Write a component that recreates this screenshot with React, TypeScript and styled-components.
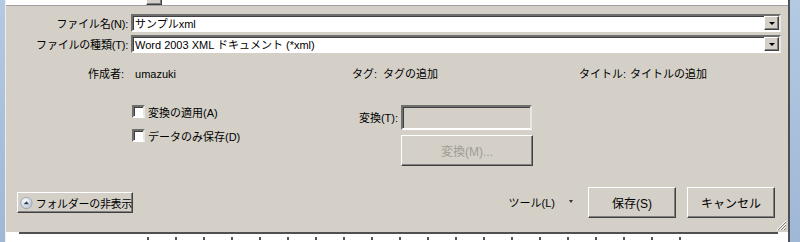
import React, { FC } from 'react';
import styled, { createGlobalStyle, css } from 'styled-components';

const GlobalStyle = createGlobalStyle`
  html, body {
    margin: 0;
    padding: 0;
    background: #ffffff;
  }
  body {
    font-family: "Liberation Sans", "Noto Sans CJK JP", sans-serif;
    font-size: 11px;
    color: #000;
  }
`;

const FACE = '#d4d0c8';

const sunken = css`
  border-style: solid;
  border-width: 2px;
  border-color: #6f6f6f #e8e6e0 #ffffff #6f6f6f;
  box-shadow: inset 1px 1px 0 #404040;
`;

const raised = css`
  border-style: solid;
  border-width: 1px;
  border-color: #ffffff #404040 #404040 #ffffff;
  box-shadow: inset -1px -1px 0 #808080;
`;

const Screen = styled.div`
  width: 800px;
  height: 242px;
  display: flex;
  flex-direction: column;
  overflow: hidden;
`;

const Middle = styled.div`
  display: flex;
  flex: 1;
`;

const Strip = styled.div<{ $w: number }>`
  width: ${ ({ $w }) => $w }px;
  background: linear-gradient(180deg, #b4c9e2, #9fb8d6);
`;

const Window = styled.div`
  flex: 1;
  display: flex;
  flex-direction: column;
  border-right: 2px solid #505050;
  border-left: 1px solid #f0eee8;
`;

const ListEdge = styled.div`
  height: 5px;
  background: #fff;
  border-bottom: 1px solid #a0a0a0;
  position: relative;
`;

const Thumb = styled.div`
  position: absolute;
  left: 140px;
  top: -2px;
  width: 14px;
  height: 5px;
  background: ${ FACE };
  ${ raised };
`;

const Dialog = styled.div`
  flex: 1;
  background: ${ FACE };
  display: flex;
  flex-direction: column;
  position: relative;
`;

const FileRows = styled.div`
  display: grid;
  grid-template-columns: 122px 650px;
  row-gap: 3px;
  column-gap: 3px;
  padding-top: 8px;
  align-items: center;
`;

const RowLabel = styled.div`
  text-align: right;
  white-space: nowrap;
  letter-spacing: -0.2px;
`;

const Combo = styled.div`
  height: 14px;
  background: #fff;
  ${ sunken };
  display: flex;
  align-items: center;
  justify-content: space-between;
  padding-left: 2px;
  white-space: nowrap;
`;

const DropButton = styled.div`
  width: 13px;
  height: 12px;
  background: ${ FACE };
  ${ raised };
  display: flex;
  align-items: center;
  justify-content: center;
`;

const Arrow = styled.div`
  width: 0;
  height: 0;
  border-left: 3px solid transparent;
  border-right: 3px solid transparent;
  border-top: 3px solid #000;
`;

const MetaRow = styled.div`
  display: flex;
  align-items: baseline;
  padding-left: 82px;
  margin-top: 12px;
`;

const MetaItem = styled.div<{ $w?: number; $gap: number }>`
  display: flex;
  align-items: baseline;
  gap: ${ ({ $gap }) => $gap }px;
  width: ${ ({ $w }) => ($w ? `${ $w }px` : 'auto') };
  white-space: nowrap;
`;

const Options = styled.div`
  display: flex;
  margin-top: 24px;
  padding-left: 126px;
`;

const Checks = styled.div`
  display: flex;
  flex-direction: column;
  gap: 11px;
  width: 222px;
`;

const CheckRow = styled.label`
  display: flex;
  align-items: center;
  gap: 3px;
  height: 13px;
  white-space: nowrap;
`;

const Box = styled.span`
  width: 9px;
  height: 9px;
  background: #fff;
  ${ sunken };
`;

const Convert = styled.div`
  display: grid;
  grid-template-columns: 44px 131px;
  row-gap: 5px;
  column-gap: 3px;
`;

const ConvertLabel = styled.div`
  padding-top: 4px;
  text-align: right;
  white-space: nowrap;
`;

const DisabledField = styled.div`
  height: 21px;
  background: ${ FACE };
  ${ sunken };
`;

const Button = styled.button<{ $w: number; $h: number; $disabled?: boolean }>`
  width: ${ ({ $w }) => $w }px;
  height: ${ ({ $h }) => $h }px;
  background: ${ FACE };
  ${ raised };
  font-family: inherit;
  font-size: 12px;
  color: ${ ({ $disabled }) => ($disabled ? '#a09c94' : '#000') };
  padding: 0;
  display: flex;
  align-items: center;
  justify-content: center;
  gap: 3px;
  white-space: nowrap;
`;

const Footer = styled.div`
  display: flex;
  align-items: center;
  margin-top: auto;
  padding: 0 0 14px 11px;
`;

const FolderButton = styled(Button)`
  justify-content: flex-start;
  padding-left: 2px;
  font-size: 11px;
  letter-spacing: -0.3px;
`;

const Spacer = styled.div`
  flex: 1;
`;

const Tools = styled.div`
  display: flex;
  align-items: center;
  gap: 14px;
  margin-right: 15px;
  margin-bottom: 2px;
`;

const SmallArrow = styled(Arrow)`
  border-left-width: 2px;
  border-right-width: 2px;
  border-top-width: 3px;
  border-top-color: #333;
`;

const Actions = styled.div`
  display: flex;
  gap: 11px;
  margin-right: 13px;
`;

const Grip = styled.svg`
  position: absolute;
  right: 1px;
  bottom: 1px;
`;

const Bottom = styled.div`
  height: 8px;
  border-top: 2px solid #505050;
  margin-left: 13px;
  margin-right: 10px;
  background: #fff;
  display: flex;
  padding-left: 128px;
  gap: 26px;
`;

const Tick = styled.span`
  width: 2px;
  height: 3px;
  margin-top: 3px;
  background: #555;
`;

const CollapseIcon: FC = () => (
  <svg width="14" height="14" viewBox="0 0 14 14">
    <defs>
      <radialGradient id="g" cx="40%" cy="35%" r="65%">
        <stop offset="0" stopColor="#ffffff"/>
        <stop offset="1" stopColor="#b9c4d2"/>
      </radialGradient>
    </defs>
    <circle cx="7" cy="7" r="6.3" fill="url(#g)" stroke="#8e9aab" strokeWidth="0.8"/>
    <path d="M4 8.5 L7 5.2 L10 8.5 Z" fill="#2c3e59"/>
  </svg>
);

const App: FC = () => (
  <Screen>
    <GlobalStyle/>
    <Middle>
      <Strip $w={ 5 }/>
      <Window>
        <ListEdge>
          <Thumb/>
        </ListEdge>
        <Dialog>
          <FileRows>
            <RowLabel>ファイル名(N):</RowLabel>
            <Combo>
              <span>サンプルxml</span>
              <DropButton><Arrow/></DropButton>
            </Combo>
            <RowLabel>ファイルの種類(T):</RowLabel>
            <Combo>
              <span>Word 2003 XML ドキュメント (*xml)</span>
              <DropButton><Arrow/></DropButton>
            </Combo>
          </FileRows>

          <MetaRow>
            <MetaItem $w={ 264 } $gap={ 11 }>
              <span>作成者:</span>
              <span>umazuki</span>
            </MetaItem>
            <MetaItem $w={ 227 } $gap={ 6 }>
              <span>タグ:</span>
              <span>タグの追加</span>
            </MetaItem>
            <MetaItem $gap={ 4 }>
              <span>タイトル:</span>
              <span>タイトルの追加</span>
            </MetaItem>
          </MetaRow>

          <Options>
            <Checks>
              <CheckRow><Box/>変換の適用(A)</CheckRow>
              <CheckRow><Box/>データのみ保存(D)</CheckRow>
            </Checks>
            <Convert>
              <ConvertLabel>変換(T):</ConvertLabel>
              <DisabledField/>
              <span/>
              <Button $w={ 132 } $h={ 31 } $disabled>変換(M)...</Button>
            </Convert>
          </Options>

          <Footer>
            <FolderButton $w={ 116 } $h={ 21 }>
              <CollapseIcon/>
              フォルダーの非表示
            </FolderButton>
            <Spacer/>
            <Tools>
              <span>ツール(L)</span>
              <SmallArrow/>
            </Tools>
            <Actions>
              <Button $w={ 88 } $h={ 31 }>保存(S)</Button>
              <Button $w={ 88 } $h={ 31 }>キャンセル</Button>
            </Actions>
          </Footer>

          <Grip width="12" height="12" viewBox="0 0 12 12">
            <path d="M11 2 L2 11 M11 5 L5 11 M11 8 L8 11" stroke="#ffffff" strokeWidth="1"/>
            <path d="M11 3 L3 11 M11 6 L6 11 M11 9 L9 11" stroke="#808080" strokeWidth="1"/>
          </Grip>
        </Dialog>
        <Bottom>
          { Array.from({ length: 20 }).map((_, i) => <Tick key={ i }/>) }
        </Bottom>
      </Window>
      <Strip $w={ 10 }/>
    </Middle>
  </Screen>
);

export default App;
